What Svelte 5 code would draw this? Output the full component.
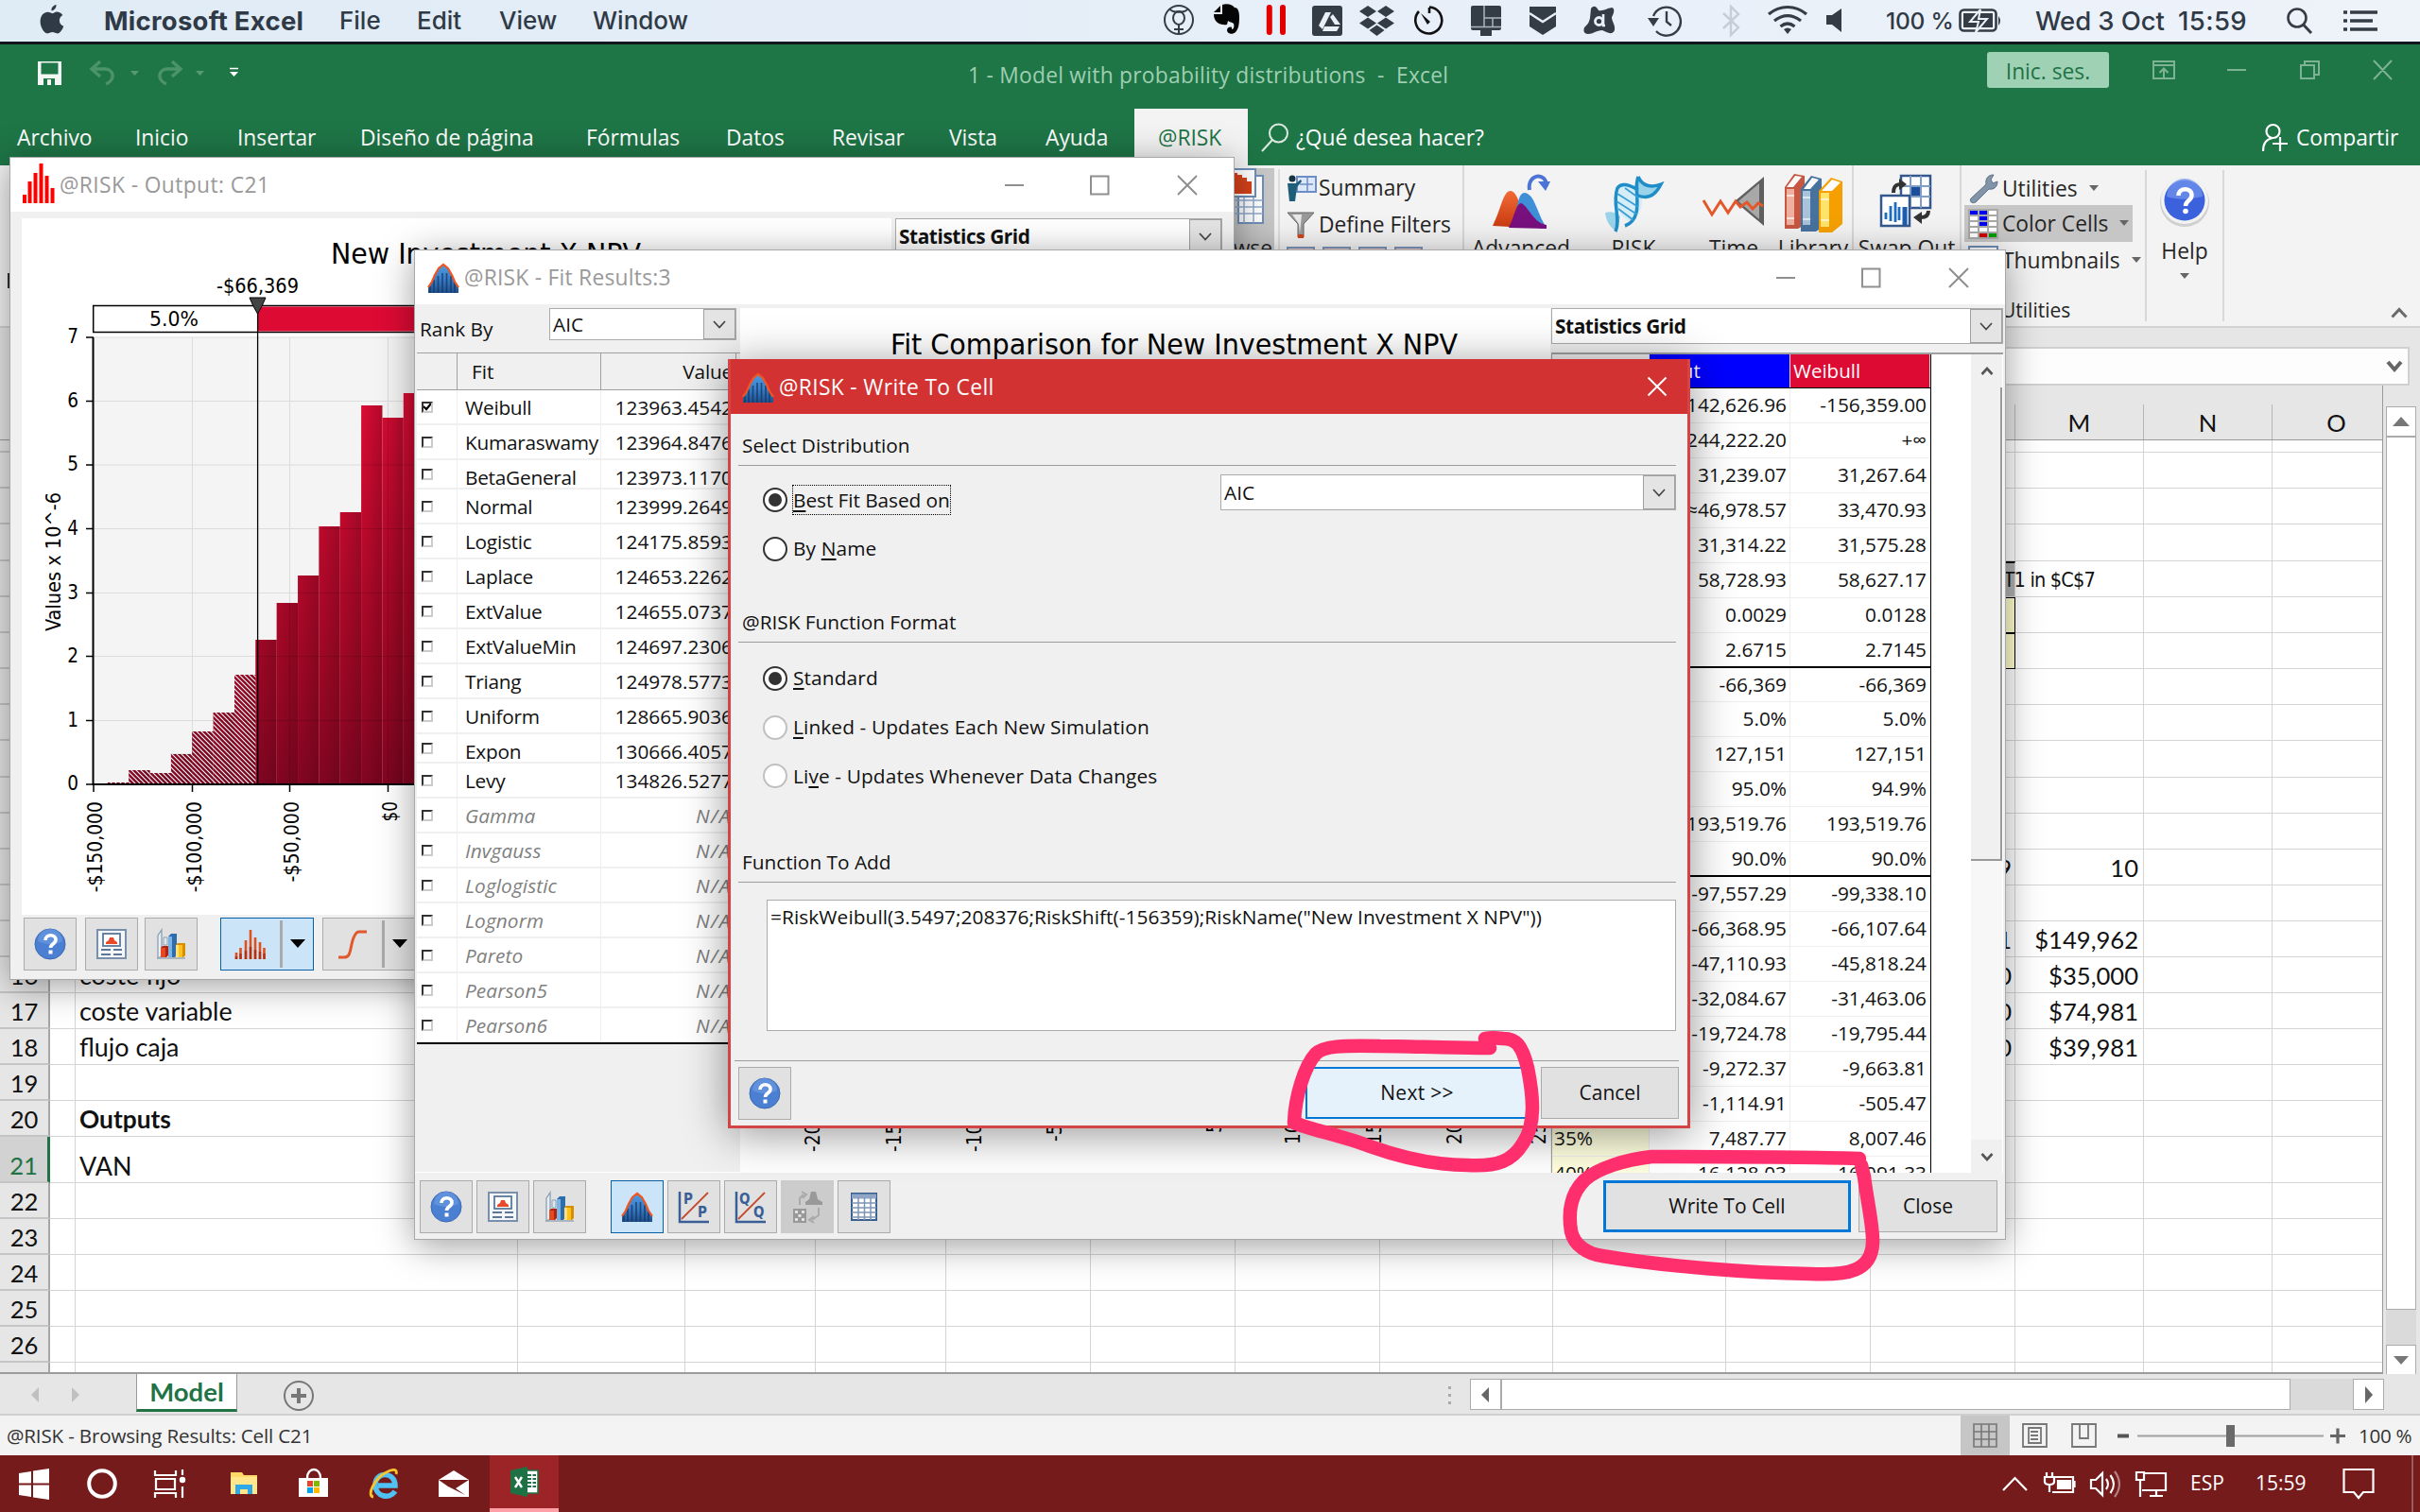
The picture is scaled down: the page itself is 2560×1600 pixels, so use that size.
<script>
  const menus = ['File', 'Edit', 'View', 'Window'];
  const tabs = ['Archivo', 'Inicio', 'Insertar', 'Diseño de página', 'Fórmulas', 'Datos', 'Revisar', 'Vista', 'Ayuda'];

  const cols = ['A', 'B', 'C', 'D', 'E', 'F', 'G', 'H', 'I', 'J', 'K', 'L', 'M', 'N', 'O'];
  const cells = {
    B16: 'coste fijo', B17: 'coste variable', B18: 'flujo caja', B20: 'Outputs', B21: 'VAN',
    L13: '9', M13: '10',
    L15: '$145,591', M15: '$149,962',
    L16: '$35,000', M16: '$35,000',
    L17: '$72,800', M17: '$74,981',
    L18: '$37,790', M18: '$39,981'
  };
  const rows = Array.from({ length: 27 }, (_, i) => i + 1);
  const rowClass = (r) => (r === 1 ? 'first' : r === 21 ? 'tall' : r === 27 ? 'last' : r === 4 || r === 10 ? 'plus' : '');

  const fits = [
    ['Weibull', '123963.4542'], ['Kumaraswamy', '123964.8476'], ['BetaGeneral', '123973.1170'],
    ['Normal', '123999.2649'], ['Logistic', '124175.8593'], ['Laplace', '124653.2262'],
    ['ExtValue', '124655.0737'], ['ExtValueMin', '124697.2306'], ['Triang', '124978.5773'],
    ['Uniform', '128665.9036'], ['Expon', '130666.4057'], ['Levy', '134826.5277'],
    ['Gamma', 'N/A'], ['Invgauss', 'N/A'], ['Loglogistic', 'N/A'], ['Lognorm', 'N/A'],
    ['Pareto', 'N/A'], ['Pearson5', 'N/A'], ['Pearson6', 'N/A']
  ];

  const stats = [
    ['Minimum', '-142,626.96', '-156,359.00'], ['Maximum', '244,222.20', '+∞'],
    ['Mean', '31,239.07', '31,267.64'], ['Mode', '≈46,978.57', '33,470.93'],
    ['Median', '31,314.22', '31,575.28'], ['Std Dev', '58,728.93', '58,627.17'],
    ['Skewness', '0.0029', '0.0128'], ['Kurtosis', '2.6715', '2.7145'],
    ['Left X', '-66,369', '-66,369'], ['Left P', '5.0%', '5.0%'],
    ['Right X', '127,151', '127,151'], ['Right P', '95.0%', '94.9%'],
    ['Dif. X', '193,519.76', '193,519.76'], ['Dif. P', '90.0%', '90.0%'],
    ['1%', '-97,557.29', '-99,338.10'], ['5%', '-66,368.95', '-66,107.64'],
    ['10%', '-47,110.93', '-45,818.24'], ['15%', '-32,084.67', '-31,463.06'],
    ['20%', '-19,724.78', '-19,795.44'], ['25%', '-9,272.37', '-9,663.81'],
    ['30%', '-1,114.91', '-505.47'], ['35%', '7,487.77', '8,007.46'],
    ['40%', '16,128.03', '16,091.33']
  ];

  // Histogram, in the output chart's own coordinates
  const tops = [827, 814, 817, 797, 773, 753, 713, 676, 637, 608, 556, 541, 428, 441, 415];
  const bars = tops.map((top, i) => ({ x: 113.9 + i * 22.35, y: top, h: 829 - top }));
  const yTicks = [[7, 356], [6, 423.5], [5, 491], [4, 558.5], [3, 626.5], [2, 693.5], [1, 761.5], [0, 829]];
  const xTicks = [['-$150,000', 99], ['-$100,000', 203.5], ['-$50,000', 306.5], ['$0', 410.5]];
  const fitTicks = [
    ['-200', 859, 1219], ['-150', 945, 1219], ['-100', 1030, 1219], ['-50', 1115, 1208],
    ['50', 1284, 1199], ['100', 1367, 1211], ['150', 1453, 1211], ['200', 1538, 1211], ['250', 1627, 1211]
  ];
</script>

{#snippet help()}
  <svg width="34" height="34" viewBox="0 0 34 34">
    <circle cx="17" cy="17" r="16" fill="#4a7fd2" stroke="#3c68b4" />
    <path d="M4 14a13 13 0 0 1 26 0c-8 4-18 4-26 0z" fill="#6f9ce2" opacity=".6" />
    <path d="M12 13c0-7 11-7 11-.5 0 4.500-5.500 4-5.500 8.500" fill="none" stroke="#fff" stroke-width="3.600" />
    <rect x="15.500" y="23.500" width="4" height="4" fill="#fff" />
  </svg>
{/snippet}

{#snippet report()}
  <svg width="34" height="34" viewBox="0 0 34 34">
    <rect x="2" y="2" width="30" height="30" fill="#f4f6f9" stroke="#7890ab" stroke-width="2" />
    <rect x="8" y="6" width="18" height="13" fill="#fff" stroke="#5b7898" stroke-width="1.800" />
    <path d="M11 17v-2l3-2 1-3h4l1 3 3 2v2z" fill="#e8492a" />
    <path d="M6 23h10M6 28h10M19 23h9M19 28h9" stroke="#5b7898" stroke-width="2" />
  </svg>
{/snippet}

{#snippet columns3d()}
  <svg width="34" height="34" viewBox="0 0 34 34">
    <path d="M3 32V8l4-6v28z" fill="#e9eef3" stroke="#8ba0b6" stroke-width="1.300" />
    <path d="M2 32h30" stroke="#9aa7b6" stroke-width="1.500" />
    <path d="M14 9l3-3h6v22l-2 3h-7z" fill="#2f6cab" /><path d="M14 9h4v22h-4z" fill="#7ab4e4" />
    <path d="M6 21l2-2h6l0 10-2 2H6z" fill="#b02410" /><path d="M6 21h5v10H6z" fill="#e34a24" />
    <path d="M9 10h4v8H9z" fill="#dfe6ee" stroke="#8ba0b6" />
    <path d="M22 18l2-2h8v13l-2 2h-8z" fill="#d98e00" /><path d="M22 18h7v13h-7z" fill="#ffc21c" /><path d="M22 18h3v13h-3z" fill="#ffe07a" />
  </svg>
{/snippet}

{#snippet curve()}
  <svg width="34" height="34" viewBox="0 0 34 34">
    <defs><linearGradient id="bell" x1="0" x2="0" y1="0" y2="1"><stop offset="0" stop-color="#4f9be0" /><stop offset=".5" stop-color="#3a7fc8" /><stop offset="1" stop-color="#1f4f8c" /></linearGradient></defs>
    <path d="M1 33V27L5 21L8 14L12 7L17 3L22 7L26 14L29 21L33 27V33z" fill="url(#bell)" />
    <path d="M3 26v7M7 19v14M11.500 15v18M16 12v21M20.500 12v21M25 15v18M29 21v12" stroke="#143766" stroke-width="1.700" opacity=".75" />
    <path d="M1 27l4-6 3-7 4-7 5-4 5 4 4 7 3 7 4 6" fill="none" stroke="#f25520" stroke-width="2.200" />
  </svg>
{/snippet}

{#snippet histo()}
  <svg width="34" height="34" viewBox="0 0 34 34">
    <path d="M2 33v-7M6.500 33V21M12 33V13M17 33V2M22 33V10M27 33V15M31.500 33v-12" stroke="#e0501c" stroke-width="2.600" />
    <path d="M2 33v-3M6.500 33v-6M12 33v-9M17 33V20M22 33v-10M27 33v-8M31.500 33v-6" stroke="#a01c08" stroke-width="2.600" opacity=".6" />
  </svg>
{/snippet}

{#snippet winButtons()}
  <svg class="winbtns" width="204" height="24" viewBox="0 0 204 24">
    <path d="M2 12h20M93 2.500h18.500v19H93zM185 2l20 20M205 2l-20 20" fill="none" stroke="#8f8f8f" stroke-width="2" />
  </svg>
{/snippet}

{#snippet chevron()}
  <span class="drop"><svg width="14" height="9" viewBox="0 0 14 9"><path d="M1 1l6 6.500L13 1" fill="none" stroke="#444" stroke-width="1.700" /></svg></span>
{/snippet}

{#snippet tri()}
  <svg width="10" height="7" viewBox="0 0 10 7"><path d="M0 0h10L5 6z" fill="#666" /></svg>
{/snippet}

<div class="screen">
  <header class="mac">
    <svg class="apple" width="26" height="32" viewBox="0 0 26 32">
      <path d="M17.500 1c.3 3-2 6.300-5 6.300C12 4.300 14.500 1.500 17.500 1zM18 8.600c2.600 0 5 1.400 6.300 3.400-5 3-4.300 9.600 1 11.800-1.300 3.500-3.800 7.600-6.500 7.600-2.200 0-2.900-1.300-5.300-1.300-2.500 0-3.400 1.300-5.400 1.300C4.700 31.400.6 24.600.6 18.800c0-6.400 4-10 8-10 2.300 0 4 1.400 5.300 1.400S16 8.600 18 8.600z" fill="#2f3a46" />
    </svg>
    <b>Microsoft Excel</b>
    {#each menus as m}<span>{m}</span>{/each}
    <svg class="macicons" width="730" height="44" viewBox="1225 0 730 44" fill="none" stroke="#343c46" stroke-width="2">
      <circle cx="1247" cy="21" r="15" />
      <path d="M1237 9c3 5 17 5 20 0M1247 26v10M1242 31h10" /><ellipse cx="1247" cy="19" rx="6" ry="7" />
      <path d="M1284 13h7V6l-7 7zM1293 5c5-2 11 0 13 3 4 0 5 5 5 10 0 8-1 13-4 16-3 3-9 2-9-2 0-4 5-4 5-3v2c2 0 3-3 2-6-2-2-4-1-6-3l-1 4c-7 1-14-2-14-11h9z" fill="#050505" stroke="none" />
      <path d="M1342.800 8v26M1357 8v26" stroke="#e30000" stroke-width="6" stroke-linecap="round" />
      <rect x="1388" y="6" width="32" height="32" rx="3" fill="#343c46" stroke="none" />
      <path d="M1402 13h6l-9 18-4-4zM1410 15l8 11h-6l-5-8zM1401 28h16l-3 5h-15z" fill="#e8eff7" stroke="none" />
      <path d="M1447 6l9 6-9 6-9-6zM1466 6l9 6-9 6-9-6zM1447 18.500l9 6-9 6-9-6zM1466 18.500l9 6-9 6-9-6zM1456.500 26.500l8 5.500-8 6-8-6z" fill="#343c46" stroke="none" />
      <path d="M1512 8v6M1512 7.500a14 14 0 1 1-11 4.500" stroke="#111" stroke-width="2.600" /><path d="M1503 14l10 9-3 3z" fill="#111" stroke="none" />
      <rect x="1556" y="6" width="32" height="26" rx="2" fill="#343c46" stroke="none" /><rect x="1566" y="32" width="12" height="6" fill="#343c46" stroke="none" />
      <path d="M1570 6v22M1570 19h18M1579 19v10M1556 28.500h32" stroke="#aab4c0" stroke-width="1.500" />
      <path d="M1618 7h28v21l-14 9-14-9z" fill="#343c46" stroke="none" /><path d="M1618 14l14 9 14-9" stroke="#e8eff7" stroke-width="2.400" />
      <path d="M1683 9c3-4 6-2 8 2 5 1 8-2 14-3 4 1 2 7 0 10 0 5 4 8 3 14-3 6-8 2-13 0-6 0-10 4-15 4-5 0-5-4-4-7 4-4 5-5 6-10z" fill="#343c46" stroke="none" />
      <circle cx="1691.500" cy="22.500" r="4" stroke="#e8eff7" stroke-width="2.800" /><path d="M1696 15v12h2" stroke="#e8eff7" stroke-width="2.600" />
      <path d="M1749 17a15 15 0 1 1 3 16" stroke-width="2.400" /><path d="M1763 12v11l5 4" stroke-width="2.400" /><path d="M1743 19h12l-6 9z" fill="#343c46" stroke="none" />
      <path d="M1823 14l16 15-8 8V7l8 8-16 15" stroke="#c5cdd6" stroke-width="2.400" />
      <path d="M1871 15c12-10 28-10 40 0M1877 22c9-7 19-7 28 0M1883.500 28c5-4 10-4 15 0" stroke-width="3.200" /><path d="M1887 31l4 5 4-5q-4-3-8 0z" fill="#343c46" stroke="none" />
      <path d="M1932 16h6l10-7v25l-10-8h-6z" fill="#343c46" stroke="none" />
    </svg>
    <span class="pct">100 %</span>
    <svg class="batt" width="47" height="26" viewBox="0 0 47 26">
      <rect x="1.500" y="1.500" width="38" height="22" rx="4" fill="none" stroke="#343c46" stroke-width="2.600" />
      <rect x="5" y="5" width="31" height="15" fill="#343c46" /><path d="M42 8q4 5 0 10z" fill="#343c46" />
      <path d="M23 1L12 14h9l-3 11 12-14h-9z" fill="#343c46" stroke="#ecf1f9" stroke-width="2" />
    </svg>
    <span class="date">Wed 3 Oct</span><span class="clock">15:59</span>
    <svg class="mag" width="98" height="28" viewBox="0 0 98 28" fill="none" stroke="#343c46">
      <circle cx="12" cy="11" r="9.500" stroke-width="2.600" /><path d="M18.500 18l8.500 9" stroke-width="3" />
      <path d="M68 5h29M68 14h24M68 23h29" stroke-width="3.600" /><path d="M61 5h4M61 14h4M61 23h4" stroke-width="3.600" />
    </svg>
  </header>

  <div class="title">
    <svg class="quick" width="230" height="30" viewBox="38 62 230 30" fill="none">
      <path d="M40 65h25v25H40z" fill="#f4f8f5" /><path d="M43.500 66.500h18v12h-18z" fill="#1e7546" /><path d="M46 83h12v7H46z" fill="#1e7546" /><path d="M50 84h4v6h-4z" fill="#f4f8f5" />
      <path d="M98 73h13c9 0 12 11 1 16M106 65l-9 8 9 8" stroke="#4d9369" stroke-width="3.500" />
      <path d="M190 73h-13c-9 0-12 11-1 16M182 65l9 8-9 8" stroke="#4d9369" stroke-width="3.500" />
      <path d="M138 75h9l-4.500 5zM207 75h9l-4.500 5z" fill="#559a70" /><path d="M243 76h9l-4.500 5z" fill="#fff" /><path d="M243 72.500h9" stroke="#fff" stroke-width="1.500" />
    </svg>
    <span class="doc">1 - Model with probability distributions&nbsp; -&nbsp; Excel</span>
    <span class="signin">Inic. ses.</span>
    <svg class="xlbtns" width="260" height="24" viewBox="2275 62 260 24" fill="none" stroke="#7db394" stroke-width="2">
      <path d="M2278 65h22v18h-22zM2278 69h22M2289 82v-9M2284.500 77l4.500-4.500 4.500 4.500M2356 74h20M2434 69h14v14h-14zM2438 69v-4h15v14h-5M2511 64l19 20M2530 64l-19 20" />
    </svg>
  </div>

  <nav class="tabs">
    {#each tabs as t}<span>{t}</span>{/each}
    <span class="active">@RISK</span>
    <span class="tell">
      <svg width="30" height="32" viewBox="0 0 30 32" fill="none" stroke="#dcebe1" stroke-width="2"><circle cx="18.500" cy="11" r="9.500" /><path d="M12 18L1 30" /></svg>
      ¿Qué desea hacer?
    </span>
    <span class="share">
      <svg width="30" height="32" viewBox="0 0 30 32" fill="none" stroke="#fff" stroke-width="2.200"><circle cx="12.500" cy="9" r="7" /><path d="M2 30c0-9 4-13 10-14M20 15v15M12 22h16" /></svg>
      Compartir
    </span>
  </nav>

  <section class="ribbon">
    <i class="stub"></i>
    <div class="browse">
      <svg width="34" height="60" viewBox="0 0 34 60">
        <rect x="6" y="8" width="26" height="50" fill="#fff" stroke="#6f8fb8" stroke-width="2" /><path d="M0 34h32M0 41h32M0 48h32M12 28v30M22 28v30" stroke="#8fa9cc" stroke-width="1.500" />
        <rect x="-4" y="1" width="28" height="29" fill="#fff" stroke="#6f8fb8" stroke-width="2" /><path d="M0 27V5h5v2h5v3h5v4h5v13z" fill="#d6421a" />
      </svg>
      <span>Browse</span>
    </div>
    <div class="pair">
      <div><svg width="32" height="28" viewBox="0 0 32 28"><rect x="11" y="2" width="20" height="16" fill="#dce8fa" stroke="#6d8dc6" stroke-width="2" /><path d="M14 10h14M22 3v14" stroke="#6d8dc6" stroke-width="1.500" /><circle cx="6" cy="4" r="3.500" fill="#16323f" /><path d="M1 9h9l5-4 1 2-5 6-2 15H3z" fill="#1f5e78" /></svg>Summary</div>
      <div><svg width="32" height="28" viewBox="0 0 32 28"><path d="M1 1h28L18 13v14h-6V13z" fill="#9a9a9a" stroke="#666" /><path d="M6 3h10l-2 20-1-10z" fill="#e8e8e8" /><path d="M12 24h6v4h-6z" fill="#d6421a" /></svg>Define Filters</div>
      <div class="minis"><i></i><i></i><i></i><i></i></div>
    </div>
    <div class="big adv">
      <svg width="66" height="62" viewBox="0 0 66 62">
        <defs><linearGradient id="or" x1="0" x2="0" y1="0" y2="1"><stop offset="0" stop-color="#f26a35" /><stop offset="1" stop-color="#c83a10" /></linearGradient></defs>
        <path d="M3 56C12 38 14 19 22 19c9 1 11 24 18 39z" fill="url(#or)" /><path d="M28 40C30 28 32 21 37 21c11 2 12 20 23 37l-6 1z" fill="#3f8fd8" /><path d="M20 58c6-12 8-26 13-26 7 2 14 22 27 23v4z" fill="#78107e" />
        <path d="M42 18c-3-17 18-20 18-4" fill="none" stroke="#4c74d4" stroke-width="4" /><path d="M51 9h13l-5 10z" fill="#4c74d4" />
      </svg>
      <span>Advanced</span>
    </div>
    <div class="big dna">
      <svg width="66" height="64" viewBox="0 0 66 64">
        <path d="M16 14c8-8 14-2 24 2 6 22-2 28-10 36-14-8-18-18-14-38z" fill="#d5edf7" />
        <path d="M38 4c2 10 14 12 24 8-6 12-14 16-26 12-4-8-2-14 2-20z" fill="#9bd3ea" /><path d="M3 42c6-2 12 0 16 4l-4 16c-6-4-11-10-12-20z" fill="#9bd3ea" />
        <path d="M14 62c6-14-4-30 2-46 4-6 12-4 22 2M24 56c22-8 8-40 14-52M38 4c4 10 14 12 24 8-6 12-14 16-24 12" fill="none" stroke="#1f8ec8" stroke-width="3.500" />
        <path d="M16 22l22 14M15 30l22 14M17 38l16 12M24 16l14 10" stroke="#3a9fd2" stroke-width="1.800" />
      </svg>
      <span>RISK</span>
    </div>
    <div class="big time">
      <svg width="66" height="62" viewBox="0 0 66 62"><path d="M34 30L65 4v52z" fill="#5f5f5f" /><path d="M38 30L60 11v38z" fill="#a8a8a8" /><path d="M1 29l9 15 9-14 8 12 8-12 5 6 7-5 6 7 6-6 5 3" fill="none" stroke="#e2582a" stroke-width="3" /></svg>
      <span>Time</span>
    </div>
    <div class="big lib">
      <svg width="64" height="64" viewBox="0 0 64 64">
        <path d="M2 15L12 1l11 2v52l-7 4H2z" fill="#c65740" /><path d="M4 17h8v38H4z" fill="#f0b0a0" />
        <path d="M19 17L30 3l11 3v52l-6 4H19z" fill="#47729e" /><path d="M21 19h8v36h-8z" fill="#a9c3da" />
        <path d="M38 19L51 5l12 4v45L52 63H38z" fill="#f5a000" /><path d="M40 21h9v36h-9z" fill="#ffe36a" />
        <path d="M13 3l7 1-9 11H4zM31 5l7 2-9 10h-7zM52 7l9 3-9 9H41z" fill="#fbfbfb" />
        <path d="M4 24h8M4 48h8M21 26h8M21 49h8M40 28h9M40 50h9" stroke="#fff" stroke-width="1.500" opacity=".8" />
      </svg>
      <span>Library</span>
    </div>
    <div class="big swap">
      <svg width="60" height="62" viewBox="0 0 60 62"><path d="M24 3h31v34H24z" fill="#fff" stroke="#34588e" stroke-width="2.500" /><path d="M24 14h31M24 25h31M34 3v34M45 3v34" stroke="#7f9dc6" stroke-width="2" /><rect x="35" y="15" width="9" height="9" fill="#1d4e9a" /><rect x="3" y="24" width="30" height="32" fill="#fff" stroke="#34588e" stroke-width="2.500" /><path d="M8 42v7M13 35v16M18 31v21M22 36v14" stroke="#1d6cc0" stroke-width="2.800" /><path d="M28 36v19" stroke="#1d5cae" stroke-width="5" /><path d="M16 21c0-8 4-9 8-9M53 40c0 6-4 7-8 7" fill="none" stroke="#333" stroke-width="4" /><path d="M22 6l8 6-8 6zM46 41v13l-9-7z" fill="#333" /></svg>
      <span>Swap Out</span>
    </div>
    <div class="utils">
      <div class="row1"><svg width="32" height="32" viewBox="0 0 32 32"><path d="M3 26L19 11c-1-6 2-10 8-10l-3 5 2 4 5-2c0 6-4 9-9 8L8 30c-4 2-7-1-5-4z" fill="#8194aa" stroke="#5e7187" /></svg>Utilities{@render tri()}</div>
      <div class="row2"><svg width="32" height="32" viewBox="0 0 32 32"><rect width="32" height="32" fill="#a8a8a8" />
        <path d="M2 2h8v4H2zM12 2h8v4h-8zM12 8h8v4h-8zM12 14h8v4h-8z" fill="#0000f0" /><path d="M22 2h8v4h-8zM2 8h8v4H2zM22 8h8v4h-8zM2 14h8v4H2zM22 14h8v4h-8zM2 20h8v4H2zM12 20h8v4h-8zM22 20h8v4h-8zM2 26h8v4H2z" fill="#fff" /><path d="M12 26h8v4h-8z" fill="#d00000" /><path d="M22 26h8v4h-8z" fill="#009a00" /></svg>Color Cells{@render tri()}</div>
      <div class="row1"><svg width="32" height="32" viewBox="0 0 32 32"><rect x="1" y="1" width="30" height="28" fill="#fff" stroke="#6d8db6" stroke-width="2" /><path d="M12 20l6-14 6 14z" fill="#d6421a" /></svg>Thumbnails{@render tri()}</div>
      <div class="grp">Utilities</div>
    </div>
    <div class="helpgrp">
      <svg width="56" height="58" viewBox="0 0 56 58"><circle cx="28" cy="30" r="26" fill="#cfcfcf" /><circle cx="28" cy="28" r="25" fill="#f2f2f2" /><circle cx="28" cy="28" r="21.500" fill="#3b62dc" /><path d="M9 24a19 19 0 0 1 38 0c-12 3-26 4-38 0z" fill="#7595ee" opacity=".7" /><path d="M21.500 23c0-9 14-9 14-.5 0 6-6.500 5.500-6.500 11.500" fill="none" stroke="#fff" stroke-width="4.500" /><circle cx="29" cy="39.500" r="2.800" fill="#fff" /></svg>
      <span>Help</span>{@render tri()}
    </div>
    <svg class="collapse" width="18" height="12" viewBox="0 0 18 12"><path d="M1.500 10.500L9 2.500l7.500 8" fill="none" stroke="#6a6a6a" stroke-width="3" /></svg>
  </section>

  <section class="fbar"><div><svg width="18" height="13" viewBox="0 0 18 13"><path d="M2 2l7 8 7-8" fill="none" stroke="#666" stroke-width="4" /></svg></div></section>

  <section class="sheet">
    <div class="grid">
      <div class="r head"><span class="n"></span>{#each cols as c}<span class="c {c}">{c}</span>{/each}</div>
      {#each rows as r}
        <div class="r {rowClass(r)}">
          <span class="n" class:sel={r === 21}>{r === 1 ? '' : r}</span>
          {#each cols as c}
            <span class="c {c}" class:bold={r === 20} class:grey={c === 'L' && r === 5} class:yellow={c === 'L' && (r === 6 || r === 7)}>{#if c === 'L' && r === 5}<em>T1 in $C$7</em>{:else}{cells[c + r] ?? ''}{/if}</span>
          {/each}
        </div>
      {/each}
    </div>
    <div class="vscroll">
      <span class="up"><svg width="18" height="10" viewBox="0 0 18 10"><path d="M0 10h18L9 0z" fill="#777" /></svg></span>
      <span class="thumb"></span><span class="track"></span>
      <span class="up"><svg width="16" height="9" viewBox="0 0 16 9"><path d="M0 0h16L8 9z" fill="#777" /></svg></span>
    </div>
  </section>

  <section class="sheettabs">
    <svg class="arrows" width="54" height="18" viewBox="0 0 54 18"><path d="M9 1v16L1 9zM44 1v16l8-8z" fill="#c0c0c0" /></svg>
    <span class="model">Model</span>
    <svg class="plus-sheet" width="34" height="34" viewBox="0 0 34 34" fill="none" stroke="#777"><circle cx="17" cy="17" r="15" stroke-width="2" /><path d="M17 9v16M9 17h16" stroke-width="4" /></svg>
    <svg class="dots" width="6" height="22" viewBox="0 0 6 22"><path d="M1 1h3v3H1zM1 9h3v3H1zM1 17h3v3H1z" fill="#aaa" /></svg>
    <div class="hscroll">
      <span class="arrow"><svg width="9" height="16" viewBox="0 0 9 16"><path d="M8 0v16L0 8z" fill="#666" /></svg></span>
      <span class="hthumb"></span><span class="htrack"></span>
      <span class="arrow"><svg width="9" height="18" viewBox="0 0 9 18"><path d="M1 0v18l8-9z" fill="#666" /></svg></span>
    </div>
  </section>

  <footer class="status">
    <span class="msg">@RISK - Browsing Results: Cell C21</span>
    <span class="viewsel"><svg width="26" height="26" viewBox="0 0 26 26"><path d="M1 1h24v24H1zM1 9h24M1 17h24M9 1v24M17 1v24" fill="none" stroke="#777" stroke-width="1.600" /></svg></span>
    <svg class="views" width="80" height="26" viewBox="0 0 80 26" fill="none" stroke="#777" stroke-width="1.800"><path d="M1 1h25v24H1zM7 5h13v16H7zM9 9h8M9 13h8M9 17h8M53 1h25v24H53zM61 1v15h9V1" /></svg>
    <svg class="zoom" width="242" height="30" viewBox="0 0 242 30"><path d="M22 15.500h197" stroke="#a0a0a0" stroke-width="2" /><path d="M1 15.500h12" stroke="#555" stroke-width="4" /><path d="M226 15.500h16M234 7.500v16" stroke="#666" stroke-width="3.200" /><path d="M116 4h9v23h-9z" fill="#6a6a6a" /></svg>
    <span class="zpct">100 %</span>
  </footer>

  <footer class="taskbar">
    <svg class="apps" width="500" height="60" viewBox="0 1540 500 60" fill="none">
      <path d="M20 1559l13-2v12.500H20zM35 1556.500l17-2.500v15.500H35zM20 1571.500h13V1584l-13-2zM35 1571.500h17V1587l-17-2.500z" fill="#fff" />
      <circle cx="108" cy="1570" r="13.800" stroke="#fff" stroke-width="4" />
      <path d="M164 1556v5h22v-5M164 1585v-5h22v5M165 1565h20v11h-20zM193 1555v6M193 1573v12" stroke="#fff" stroke-width="2.200" /><circle cx="193" cy="1566" r="3.200" fill="#fff" />
      <path d="M244 1558h12l2 3h14v20h-28z" fill="#ffd866" /><path d="M244 1563h28v18h-28z" fill="#ffe68c" /><path d="M249 1581v-10h18v10h-5v-5h-8v5z" fill="#2fa8e8" />
      <path d="M316 1564h31v20h-31z" fill="#fff" /><path d="M325 1564c0-12 14-12 14 0" stroke="#fff" stroke-width="2.400" /><path d="M325 1567h6v6h-6z" fill="#e8432d" /><path d="M332 1567h6v6h-6z" fill="#7fba00" /><path d="M325 1574h6v6h-6z" fill="#00a4ef" /><path d="M332 1574h6v6h-6z" fill="#ffb900" />
      <path d="M418 1578c-6 9-21 6-21-7 0-14 21-14 21 1h-18" stroke="#4fc1f2" stroke-width="5.500" /><path d="M395 1584c-8-1 2-20 12-25 8-5 14-5 12 1" stroke="#f7c62f" stroke-width="2.800" />
      <path d="M464 1566l16-10 16 10v18h-32z" fill="#fff" /><path d="M464 1566h32l-14 9 10 7-18-9z" fill="#761b1b" />
    </svg>
    <span class="xl">
      <svg width="30" height="32" viewBox="0 0 30 32"><rect x="15" y="4" width="14" height="24" fill="#fff" stroke="#1e7145" stroke-width="1.500" /><path d="M18 9h9M18 13h9M18 17h9M18 21h9" stroke="#1e7145" stroke-width="2" stroke-dasharray="4 1.500" /><path d="M0 4l18-4v32L0 28z" fill="#1e7145" /><path d="M5 11l7 11M12 11L5 22" stroke="#fff" stroke-width="2.400" /></svg>
    </span>
    <svg class="tray" width="176" height="36" viewBox="2118 1552 176 36" fill="none" stroke="#fff" stroke-width="2.200">
      <path d="M2119 1577l12.500-13 12.500 13" />
      <path d="M2174 1563h19v16h-22M2194.500 1567v7M2163 1563h10v5c0 4-10 4-10 0zM2165 1558v5M2171 1558v5M2168 1571v8" /><path d="M2177 1567h13v8h-13z" fill="#fff" />
      <path d="M2212 1566h5l7-7v23l-7-7h-5zM2228 1565q4 5.500 0 11M2232.500 1561q7 9.500 0 19" /><path d="M2237 1557q10 13.500 0 27" opacity=".45" />
      <path d="M2268 1559h23v18h-25M2274 1583h14M2281 1577v6M2260 1558h8v8h-8zM2264 1566v18" />
    </svg>
    <span class="esp">ESP</span><span class="time2">15:59</span>
    <svg class="note" width="34" height="34" viewBox="0 0 34 34"><path d="M1.500 2h31v24H22l-5 6-5-6H1.500z" fill="none" stroke="#fff" stroke-width="2.200" /></svg>
    <i class="peek"></i>
  </footer>

  <!-- Output window -->
  <section class="win output">
    <div class="wtitle">
      <svg width="34" height="44" viewBox="0 0 34 44"><path d="M2 43v-9M7.500 43V20M13.500 43V11M19.500 43V1M25.500 43V14M31.500 43V27" stroke="#f00" stroke-width="4" /></svg>
      <span>@RISK - Output: C21</span>{@render winButtons()}
    </div>
    <div class="obody">
      <svg class="chart" width="920" height="737" viewBox="23 230 920 737">
        <defs>
          <linearGradient id="bar" x1="0" x2="1" y1="0" y2="0"><stop offset="0" stop-color="#de0b35" /><stop offset="1" stop-color="#b50a2c" /></linearGradient>
          <linearGradient id="shade" gradientUnits="userSpaceOnUse" x1="0" x2="0" y1="415" y2="829"><stop offset="0" stop-color="#300" stop-opacity="0" /><stop offset="1" stop-color="#300010" stop-opacity=".52" /></linearGradient>
          <pattern id="hatch" width="5" height="5" patternUnits="userSpaceOnUse"><path d="M-1-1l7 7M-1 4l2 2M4-1l2 2" stroke="#fff" stroke-width="1.100" /></pattern>
        </defs>
        <text x="350" y="278" class="ctitle" textLength="328" lengthAdjust="spacingAndGlyphs">New Investment X NPV</text>
        <rect x="98.500" y="356" width="420" height="473" fill="#f4f4f4" />
        {#each yTicks as [v, y]}
          <path d="M98 {y}h420" stroke="#dcdcdc" /><path d="M91 {y}h8" stroke="#000" stroke-width="1.500" /><text x="83" y={y + 6} text-anchor="end">{v}</text>
        {/each}
        {#each xTicks as [t, x]}
          <path d="M{x} 356v473" stroke="#dcdcdc" /><path d="M{x} 829v8" stroke="#000" stroke-width="1.500" /><text transform="translate({x + 9} 847) rotate(-90)" text-anchor="end" textLength={t.length * 10.700} lengthAdjust="spacingAndGlyphs">{t}</text>
        {/each}
        {#each bars as b}<rect x={b.x} y={b.y} width="22.350" height={b.h} fill="url(#bar)" /><rect x={b.x} y={b.y} width="22.350" height={b.h} fill="url(#shade)" />{/each}
        <path d="M113.900 829v-2h22.350v-13h22.350v3h22.350v-20h22.350v-24h22.350v-20h22.350v-40h22.350v116z" fill="url(#hatch)" />
        <path d="M203.500 773v56M306.500 637v192M410.500 441v388M180 797h24M225 761.500h218M272 693.500h171M316 626.500h127M340 558.500h103M384 491h60" stroke="#000" opacity=".12" />
        <path d="M98.500 356v473H520" fill="none" stroke="#000" stroke-width="2" />
        <rect x="98.700" y="322.500" width="420" height="28" fill="#fff" stroke="#000" stroke-width="1.500" /><rect x="273" y="323.500" width="250" height="26" fill="#dd0a34" />
        <path d="M272.600 328v501" stroke="#000" stroke-width="1.300" /><path d="M264 314h17l-4 9-4.500 8-4.500-8z" fill="#444" stroke="#000" />
        <text x="229" y="308.500" textLength="87" lengthAdjust="spacingAndGlyphs">-$66,369</text><text x="158" y="344" textLength="52" lengthAdjust="spacingAndGlyphs">5.0%</text>
        <text transform="translate(64 667) rotate(-90)" textLength="147" lengthAdjust="spacingAndGlyphs">Values x 10^-6</text>
      </svg>
      <div class="combo ocombo"><b>Statistics Grid</b>{@render chevron()}</div>
    </div>
    <div class="otools">
      <span class="btn">{@render help()}</span><span class="btn">{@render report()}</span><span class="btn">{@render columns3d()}</span>
      <span class="btn split on">{@render histo()}<i></i><svg width="16" height="10" viewBox="0 0 16 10"><path d="M0 0h16L8 9z" /></svg></span>
      <span class="btn split"><svg width="34" height="34" viewBox="0 0 34 34"><path d="M2 31h6c5 0 6-4 7-9s3-18 9-18h8" fill="none" stroke="#e0582c" stroke-width="3" /></svg><i></i><svg width="16" height="10" viewBox="0 0 16 10"><path d="M0 0h16L8 9z" /></svg></span>
    </div>
  </section>

  <!-- Fit results window -->
  <section class="win fit">
    <div class="wtitle">
      {@render curve()}<span>@RISK - Fit Results:3</span>{@render winButtons()}
    </div>
    <div class="fbody">
      <div class="fleft">
        <div class="rank"><span>Rank By</span><div class="combo">AIC{@render chevron()}</div></div>
        <div class="fhead"><span></span><span>Fit</span><span class="v">Value</span></div>
        {#each fits as [name, v], i}
          <div class="frow" class:short={i === 2 || i === 10} class:na={v === 'N/A'}>
            <span class="ck"><i>{#if i === 0}<svg width="8" height="8" viewBox="0 0 8 8"><path d="M0 3l3 3 5-6" fill="none" stroke="#000" stroke-width="2.200" /></svg>{/if}</i></span>
            <span>{name}</span><span class="v">{v}</span>
          </div>
        {/each}
        <div class="fend"></div>
      </div>
      <svg class="fchart" width="857" height="915" viewBox="783 326 857 915">
        <rect x="783" y="326" width="857" height="915" fill="#fff" />
        <text x="942" y="375" class="ctitle" textLength="600" lengthAdjust="spacingAndGlyphs">Fit Comparison for New Investment X NPV</text>
        {#each fitTicks as [t, x, y]}<text transform="translate({x + 8} {y}) rotate(-90)">{t}</text>{/each}
      </svg>
      <div class="fright">
        <div class="combo"><b>Statistics Grid</b>{@render chevron()}</div>
        <div class="sbox">
          <div class="stats">
            <div class="shead"><span></span><span class="blue">Input</span><span class="red">Weibull</span></div>
            {#each stats as [n, a, b], i}
              <div class="srow" class:sep={i === 7 || i === 13}><span class="lab">{n}</span><span>{a}</span><span>{b}</span></div>
            {/each}
          </div>
          <div class="sscroll">
            <span class="sup"><svg width="14" height="10" viewBox="0 0 14 10"><path d="M1.500 8L7 2l5.500 6" fill="none" stroke="#555" stroke-width="2.600" /></svg></span>
            <span class="sthumb"></span><span class="strack"></span>
            <span class="sup"><svg width="14" height="10" viewBox="0 0 14 10"><path d="M1.500 2L7 8l5.500-6" fill="none" stroke="#555" stroke-width="2.600" /></svg></span>
          </div>
        </div>
      </div>
    </div>
    <div class="ftools">
      <span class="btn">{@render help()}</span><span class="btn">{@render report()}</span><span class="btn">{@render columns3d()}</span>
      <span class="btn on gap">{@render curve()}</span>
      <span class="btn"><svg width="34" height="36" viewBox="0 0 34 36"><path d="M2 2v32h31" fill="none" stroke="#3a5f96" stroke-width="2.500" /><path d="M4 31L32 3" stroke="#c44a2c" stroke-width="1.800" /><text x="6" y="15">P</text><text x="21" y="29">P</text></svg></span>
      <span class="btn"><svg width="34" height="36" viewBox="0 0 34 36"><path d="M2 2v32h31" fill="none" stroke="#3a5f96" stroke-width="2.500" /><path d="M4 31L32 3" stroke="#c44a2c" stroke-width="1.800" /><text x="5" y="15">Q</text><text x="20" y="29">Q</text></svg></span>
      <span class="btn off"><svg width="34" height="36" viewBox="0 0 34 36"><path d="M15 16v-3l4-3 2-8h5l2 8 5 3v3z" fill="#999" /><rect x="2" y="20" width="14" height="15" fill="#999" /><path d="M4 23.500h3M11 23.500h3M7.500 27.500h3M4 31.500h3M11 31.500h3" stroke="#eee" stroke-width="2.500" /><path d="M9 16V9l4-4M29 19v8l-7 5M11 2l5 3-4 4M24 28l-5 4 5 3" fill="none" stroke="#aaa" stroke-width="2" /></svg></span>
      <span class="btn"><svg width="28" height="30" viewBox="0 0 28 30"><rect x="1" y="1" width="26" height="28" fill="#fff" stroke="#38608f" stroke-width="2" /><path d="M1 4h26" stroke="#8fa6c4" stroke-width="5" /><path d="M1 11h26M1 16h26M1 21h26M1 26h26M8 5v24M14.500 5v24M21 5v24" stroke="#7d95b6" stroke-width="1.500" /></svg></span>
      <span class="push write">Write To Cell</span><span class="push close">Close</span>
    </div>
  </section>

  <!-- Write To Cell dialog -->
  <section class="dialog">
    <div class="dtitle">{@render curve()}<span>@RISK - Write To Cell</span>
      <svg class="dx" width="22" height="22" viewBox="0 0 22 22"><path d="M1.500 1.500l19 19M20.500 1.500l-19 19" stroke="#fff" stroke-width="2" /></svg></div>
    <div class="dbody">
      <h3>Select Distribution</h3>
      <div class="pick">
        <div class="radios">
          <label class="radio on"><i></i><span class="focus"><u>B</u>est Fit Based on</span></label>
          <label class="radio"><i></i><span>By <u>N</u>ame</span></label>
        </div>
        <div class="combo">AIC{@render chevron()}</div>
      </div>
      <h3>@RISK Function Format</h3>
      <div class="radios fmt">
        <label class="radio on"><i></i><span><u>S</u>tandard</span></label>
        <label class="radio dim"><i></i><span><u>L</u>inked - Updates Each New Simulation</span></label>
        <label class="radio dim"><i></i><span>Li<u>v</u>e - Updates Whenever Data Changes</span></label>
      </div>
      <h3>Function To Add</h3>
      <div class="formula">=RiskWeibull(3.5497;208376;RiskShift(-156359);RiskName("New Investment X NPV"))</div>
      <div class="dfoot">
        <span class="btn">{@render help()}</span>
        <span class="push next">Next &gt;&gt;</span><span class="push cancel">Cancel</span>
      </div>
    </div>
  </section>

  <svg class="ink" width="2560" height="1600" viewBox="0 0 2560 1600" fill="none" stroke="#ff2f6d" stroke-width="14.500" stroke-linejoin="round" stroke-linecap="round">
    <path d="M1576 1109C1530 1109 1490 1107 1460 1107C1420 1106 1400 1107 1392 1115C1380 1128 1370 1160 1369 1188C1385 1195 1420 1202 1449 1213C1480 1224 1515 1233 1552 1233C1585 1235 1600 1228 1611 1210C1625 1190 1622 1160 1616 1130C1610 1106 1604 1099 1590 1099C1580 1098 1572 1098 1571 1099L1576 1109" />
    <path d="M1967 1226C1900 1224 1820 1224 1747 1224C1720 1227 1690 1236 1676 1249C1660 1265 1659 1285 1662 1303C1665 1318 1680 1327 1695 1329C1760 1340 1850 1347 1915 1348C1955 1350 1980 1345 1981 1315C1982 1300 1975 1270 1972 1245L1969 1233" />
  </svg>
</div>

<style>
  :global(body) { margin: 0; overflow: hidden; }
  .screen, .screen :global(*) { box-sizing: border-box; }
  .screen { position: relative; width: 2560px; height: 1600px; overflow: hidden; display: flex; flex-direction: column; background: #e6e6e6; font: 22.800px/1.2 "Open Sans", "Noto Sans", sans-serif; color: #111; white-space: nowrap; }
  svg { display: block; flex: none; }
  span, b { flex: none; }
  i, em { font-style: normal; }

  .mac { height: 47px; border-bottom: 3px solid #10161c; display: flex; align-items: center; background: linear-gradient(90deg, #dfebf5, #e6eef8 50%, #eef3fa); font: 500 26px/44px Inter, sans-serif; color: #2f3a46; flex: none; }
  .apple { margin: -4px 42px 0 42px; }
  .mac b { width: 249px; font-size: 27.500px; font-weight: 700; letter-spacing: .25px; }
  .mac span { width: 87px; }
  .mac b + span { width: 82px; }
  .mac b + span + span + span { width: 99px; }
  .mac b + span + span + span + span { width: 598px; }
  .mac .pct { width: 77px; margin-left: 40px; font-size: 24.500px; letter-spacing: -.2px; }
  .batt { margin-right: 34px; }
  .mac .date { width: 151px; font-size: 27.500px; letter-spacing: -.1px; }
  .mac .clock { width: 114px; font-size: 27.500px; letter-spacing: .4px; }

  .title { height: 68px; background: #1e7546; display: flex; flex: none; }
  .quick { margin: 15px 0 0 38px; }
  .doc { margin: 19px 0 0 756px; width: 1078px; color: #9fcfb2; letter-spacing: .25px; }
  .signin { width: 129px; height: 38px; margin-top: 8px; background: #9fd1b4; color: #217346; border-radius: 3px; text-align: center; line-height: 42px; }
  .xlbtns { margin: 15px 0 0 44px; }

  .tabs { height: 60px; flex: none; background: #1e7546; color: #fff; display: grid; grid-template-columns: 125px 108px 130px 239px 148px 112px 124px 102px 94px 120px 1072px 150px; padding-left: 18px; line-height: 62px; }
  .tabs .active { background: #f3f3f3; color: #217346; padding-left: 25px; }
  .tell, .share { display: flex; align-items: center; gap: 7px; }
  .tell { padding-left: 14px; }

  .ribbon { height: 172px; flex: none; background: #f3f3f3; border-bottom: 2px solid #d2d2d2; display: flex; padding-left: 8px; color: #262626; }
  .stub { width: 20px; height: 16px; border: 2px solid #333; margin-top: 114px; margin-right: 1277px; }
  .browse { width: 43px; height: 120px; margin-top: 3px; background: #c6c6c6; display: flex; flex-direction: column; align-items: flex-end; overflow: hidden; padding-right: 2px; }
  .browse svg { margin-right: 8px; }
  .browse span { margin-top: 11px; }
  .pair { width: 195px; margin: 4px 0 0 4px; padding-left: 7px; border-left: 2px solid #dcdcdc; display: flex; flex-direction: column; }
  .pair div { height: 39px; display: flex; align-items: center; gap: 2px; }
  .pair .minis { align-items: flex-start; padding-top: 4px; gap: 8px; }
  .minis i { width: 30px; height: 30px; border: 2px solid #7d95bb; background: #e9c9c4; }
  .big { display: flex; flex-direction: column; align-items: center; padding-top: 8px; }
  .big span { margin-top: auto; padding-bottom: 69px; }
  .adv { width: 122px; border-left: 2px solid #d8d8d8; }
  .dna { width: 120px; padding-right: 2px; }
  .time { width: 90px; }
  .lib { width: 76px; margin: 0 3px 0 1px; }
  .swap { width: 116px; border-left: 2px solid #d8d8d8; border-right: 2px solid #d8d8d8; }
  .utils { width: 194px; padding: 5px 0 0 3px; display: flex; flex-direction: column; }
  .utils div { height: 39px; flex: none; display: flex; align-items: center; gap: 4px; padding-left: 4px; width: 178px; }
  .utils div svg:last-child { margin-left: 8px; }
  .utils .row2 { background: #c6c6c6; margin-top: -2px; }
  .utils .grp { margin: 14px 0 0 39px; font-size: 21px; padding: 0; }
  .helpgrp { width: 84px; margin-top: 5px; border-left: 2px solid #d8d8d8; border-right: 2px solid #d8d8d8; display: flex; flex-direction: column; align-items: center; gap: 10px; padding-top: 4px; height: 160px; }
  .collapse { margin: 150px 0 0 176px; }

  .fbar { height: 61px; flex: none; padding: 20px 11px 0 60px; }
  .fbar div { height: 41px; background: #fdfdfd; border: 2px solid #d0d0d0; display: flex; align-items: center; justify-content: flex-end; padding-right: 5px; }

  .sheet { height: 1046px; flex: none; display: flex; overflow: hidden; }
  .grid { width: 2521px; overflow: hidden; background: #fff; border-right: 1px solid #999; border-bottom: 2px solid #9c9c9c; font: 25.600px/38px Lato, sans-serif; color: #111; }
  .r { display: flex; height: 38px; width: 2700px; }
  .r.first { height: 13px; }
  .r.plus { height: 39px; line-height: 39px; }
  .r.tall { height: 49px; line-height: 61px; }
  .r.head { height: 58px; background: #e6e6e6; border-bottom: 1.500px solid #999; text-align: center; line-height: 79px; }
  .n { width: 53px; background: #e6e6e6; border-right: 2px solid #a6a6a6; border-bottom: 2px solid #c4c4c4; text-align: center; }
  .n.sel { background: #d2d2d2; color: #217346; border-right: 3px solid #217346; }
  .c { border-right: 1.500px solid #d4d4d4; border-bottom: 1.500px solid #d4d4d4; padding: 0 5px; text-align: right; width: 153px; }
  .head .c.c { border-bottom: 0; text-align: center; font-size: 25.600px; border-image: linear-gradient(transparent 35%, #b5b5b5 35%) 1; }
  .head .n { border: 0; }
  .c.A { width: 27px; } .c.B { width: 468px; text-align: left; padding-left: 4px; font-size: 26.900px; } .c.C { width: 177px; } .c.D { width: 138px; } .c.E { width: 138px; }
  .c.F { width: 153px; } .c.I { width: 183px; } .c.J { width: 183px; } .c.M, .c.N, .c.O { width: 136px; }
  .c.bold { font-weight: 700; font-size: 26.300px; }
  .c.L { width: 153px; padding-right: 3px; }
  .grey { background: #b0b0b0; border-top: 2px solid #000; display: flex; justify-content: flex-end; }
  .grey em { margin-right: -88px; font: 21.500px/36px "DejaVu Sans Condensed", sans-serif; letter-spacing: -.8px; }
  .yellow { background: #ffffcc; border: 1.500px solid #000; }
  .vscroll { margin-left: 3px; width: 32px; padding-top: 22px; display: flex; flex-direction: column; }
  .up { height: 32px; background: #fff; border: 1.500px solid #ababab; display: flex; align-items: center; justify-content: center; }
  .thumb { height: 924px; background: #fff; border: 1.500px solid #ababab; }
  .track { height: 37px; background: #dadada; }

  .sheettabs { height: 44px; flex: none; border-bottom: 2px solid #cfcfcf; display: flex; }
  .arrows { margin: 13px 0 0 32px; }
  .model { width: 107px; height: 40px; margin-left: 58px; background: #fff; border-bottom: 3px solid #217346; border-left: 1px solid #999; border-right: 1px solid #999; text-align: center; color: #217346; font: 700 27.500px/37px Lato, sans-serif; }
  .plus-sheet { margin: 6px 0 0 48px; }
  .dots { margin: 12px 0 0 1198px; }
  .hscroll { margin: 5px 0 0 18px; height: 33px; display: flex; }
  .arrow { width: 33px; border: 1.500px solid #ababab; background: #fff; display: flex; align-items: center; justify-content: center; }
  .hthumb { width: 835px; background: #fff; border: 1.500px solid #ababab; }
  .htrack { width: 66px; background: #dadada; }

  .status { height: 42px; flex: none; background: #f3f3f3; display: flex; align-items: center; font-size: 20.600px; color: #333; }
  .msg { width: 2067px; margin-left: 7px; letter-spacing: -.17px; }
  .viewsel { width: 52px; height: 42px; background: #c6c6c6; display: flex; align-items: center; justify-content: center; }
  .views { margin-left: 13px; }
  .zoom { margin-left: 20px; }
  .zpct { margin-left: 14px; letter-spacing: -.3px; }

  .taskbar { height: 60px; flex: none; background: #761b1b; display: flex; align-items: center; color: #fff; font-size: 21px; }
  .xl { width: 73px; height: 60px; margin-left: 18px; background: #9c2426; border-bottom: 4px solid #ffa0a8; display: flex; align-items: center; justify-content: center; }
  .tray { margin-left: 1527px; }
  .esp { width: 69px; margin-left: 23px; }
  .time2 { width: 92px; }
  .peek { margin-left: 39px; width: 2px; height: 60px; background: #9c5a5a; }

  .win { position: absolute; background: #f0f0f0; border: 1.500px solid #a8a8a8; box-shadow: 0 6px 36px rgba(0, 0, 0, .38); display: flex; flex-direction: column; font-size: 20.800px; }
  .output { left: 10px; top: 166px; width: 1296px; height: 871px; }
  .fit { left: 438px; top: 264px; width: 1684px; height: 1048px; }
  .wtitle { height: 57px; flex: none; background: #fff; display: flex; align-items: center; color: #999; padding-left: 13px; font-size: 22.800px; letter-spacing: .25px; }
  .wtitle span { margin-left: 5px; }
  .output .wtitle svg:first-child { height: 44px; margin-top: -3px; }
  .output .wtitle span { letter-spacing: .4px; }
  .winbtns { margin-left: auto; margin-right: 40px; overflow: visible; width: 204px; }
  .obody { height: 744px; padding: 7px 12px 0 12px; display: flex; }
  .chart { background: #fff; }
  .chart text, .fchart text { font: 20.500px "DejaVu Sans Condensed", "DejaVu Sans", sans-serif; font-stretch: condensed; fill: #000; }
  .chart .ctitle, .fchart .ctitle { font-size: 31px; }
  .combo { height: 34px; background: #fff; border: 1.500px solid #ababab; display: flex; align-items: center; justify-content: space-between; padding-left: 3px; }
  .combo b { letter-spacing: -.4px; }
  .drop { width: 34px; height: 100%; border: 1.500px solid #a0a0a0; background: #e4e4e4; display: flex; align-items: center; justify-content: center; }
  .ocombo { margin-left: 4px; width: 347px; height: 38px; }
  .otools { display: flex; padding: 3px 0 0 14px; gap: 7px; }
  .btn { width: 56px; height: 56px; border: 1.500px solid #ababab; background: #e1e1e1; display: flex; align-items: center; justify-content: center; }
  .btn.on { background: #cce4f7; border-color: #0560a8; }
  .btn.off { background: #ccc; border-color: #ccc; }
  .btn text { font: 700 15px "DejaVu Sans Condensed", "DejaVu Sans", sans-serif; fill: #3a5f96; }
  .otools .btn:first-child { margin-right: 2px; }
  .otools .split { width: 99px; gap: 8px; margin-left: 2px; padding-left: 6px; }
  .otools .split.on { margin-left: 17px; }
  .split i { width: 3px; height: 50px; background: #aaa; margin-left: 6px; }

  .fbody { height: 919px; flex: none; padding-top: 4px; display: flex; }
  .fleft { width: 344px; padding-left: 2px; height: 915px; overflow: hidden; border-bottom: 1.500px solid #fff; }
  .rank { display: flex; align-items: flex-start; height: 47px; padding-left: 3px; }
  .rank span:first-child { width: 137px; padding-top: 10px; }
  .rank .combo { width: 198px; }
  .rank .combo .drop, .combo .drop { width: 34px; padding: 0; }
  .fhead, .frow { display: grid; grid-template-columns: 43px 152px 143px; }
  .fhead { height: 40px; border-top: 1.500px solid #a0a0a0; border-bottom: 1.500px solid #a0a0a0; line-height: 39px; }
  .fhead span { border-right: 1.500px solid #a0a0a0; padding: 0 7px 0 15px; }
  .fhead span.v { padding-right: 3px; letter-spacing: -.2px; }
  .v { text-align: right; }
  .frow { height: 37px; background: #fff; line-height: 36.500px; overflow: hidden; border-bottom: 2px solid #f0f0f0; }
  .frow.short { height: 31.200px; }
  .frow span { border-right: 1.500px solid #eee; padding: 0 3px 0 8px; height: 38px; letter-spacing: -.25px; }
  .frow span.v { letter-spacing: 0; }
  .frow.na span { color: #808080; font-style: italic; letter-spacing: .1px; }
  .frow.na span.v { letter-spacing: 1.500px; padding-right: 4px; }
  .frow .ck { padding: 12px 0 0 5px; }
  .short .ck { padding-top: 9px; }
  .ck i { display: block; width: 12px; height: 12px; border: 2px solid #333; border-right-color: #ccc; border-bottom-color: #ccc; background: #fff; }
  .fend { height: 2px; background: #000; margin-top: -1px; }
  .fright { width: 478px; margin-left: 1px; display: flex; flex-direction: column; }
  .fright .combo { height: 38px; }
  .sbox { margin-top: 9px; height: 868px; display: flex; background: #fff; overflow: hidden; border-top: 2px solid #a0a0a0; border-left: 1px solid #a0a0a0; }
  .stats { width: 401px; border-right: 1.500px solid #000; height: 868px; }
  .shead, .srow { display: grid; grid-template-columns: 103px 149px 148px; }
  .shead { height: 36px; border-bottom: 2px solid #000; background: #f0f0f0; color: #fff; line-height: 35px; font-size: 20.500px; }
  .shead span { padding-left: 3px; border-right: 1.500px solid #ddd; }
  .blue { background: #0000ff; }
  .red { background: #dd0a34; }
  .srow { height: 36.950px; line-height: 35px; border-bottom: 1.500px solid #eee; text-align: right; }
  .srow.sep { border-bottom: 2px solid #000; }
  .srow span { padding-right: 3px; border-right: 1.500px solid #eee; }
  .srow .lab { background: #ffffdf; text-align: left; padding-left: 2px; }
  .sscroll { margin-left: 42px; width: 33px; display: flex; flex-direction: column; }
  .sup { height: 35px; background: #f0f0f0; display: flex; align-items: center; justify-content: center; }
  .sthumb { height: 501px; background: #f0f0f0; border-right: 2px solid #999; border-bottom: 2px solid #999; }
  .strack { height: 295px; background: #f7f7f7; }
  .ftools { display: flex; padding: 8px 8px 0 5px; gap: 4px; }
  .ftools .gap { margin-left: 22px; }
  .push { height: 55px; border: 1.500px solid #ababab; background: #e1e1e1; display: flex; align-items: center; justify-content: center; font-size: 21px; padding-top: 1px; }
  .write { width: 262px; margin-left: auto; border: 3px solid #0078d7; margin-right: 4px; }
  .close { width: 147px; }

  .dialog { position: absolute; left: 770px; top: 380px; width: 1018px; height: 814px; border: 3px solid #d44444; border-top-width: 0; background: #f0f0f0; box-shadow: 0 6px 44px rgba(0, 0, 0, .42); font-size: 20.800px; }
  .dtitle { height: 58px; background: #d23232; color: #fff; display: flex; align-items: center; padding: 2px 0 0 12px; font-size: 22.800px; letter-spacing: .35px; }
  .dtitle span { margin-left: 5px; }
  .dx { margin: -2px 21px 0 auto; }
  .dbody { padding: 17px 12px 0 8px; }
  h3 { margin: 0; font-size: 20.800px; font-weight: 400; line-height: 32px; height: 38px; padding-left: 4px; border-bottom: 1.500px solid #9c9c9c; }
  .pick { display: flex; justify-content: space-between; height: 149px; padding-top: 9px; }
  .pick .combo { width: 482px; height: 38px; }
  .radios { padding: 2px 0 0 26px; }
  .fmt { padding-top: 12px; height: 216px; }
  .radio { display: flex; align-items: center; height: 51.700px; gap: 6px; letter-spacing: .14px; }
  .pick .radio { height: 51px; }
  .pick .radio:first-child { height: 34px; margin: 8px 0 9px; letter-spacing: -.05px; }
  .radio i { width: 26px; height: 26px; border: 2.200px solid #333; border-radius: 50%; background: #fff; flex: none; display: flex; }
  .radio.dim i { border-color: #c0c0c0; }
  .radio.on i::after { content: ''; width: 14px; height: 14px; border-radius: 50%; background: #333; margin: auto; }
  .focus { outline: 1.500px dotted #000; line-height: 30px; }
  u { text-underline-offset: 3px; text-decoration-thickness: 1.500px; }
  .formula { margin: 18px 0 0 30px; height: 139px; border: 1.500px solid #ababab; background: #fff; padding: 2px 3px; line-height: 30px; letter-spacing: .1px; }
  .dfoot { margin: 31px -3px 0 -4px; border-top: 1.500px solid #9c9c9c; padding: 6px 0 0 4px; display: flex; }
  .next { margin-left: auto; width: 240px; background: #e5f1fb; border: 2px solid #0078d7; margin-right: 9px; padding-right: 4px; letter-spacing: .3px; }
  .cancel { width: 146px; }
  .ink { position: absolute; inset: 0; }
</style>
